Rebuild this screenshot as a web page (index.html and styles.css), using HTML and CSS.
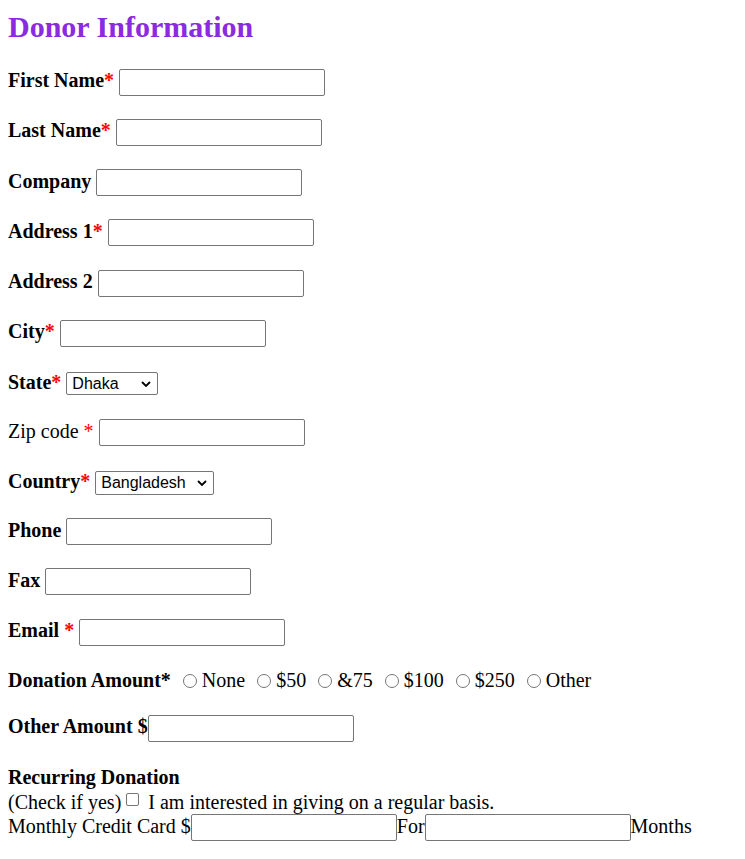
FILE: index.html
```html
<!DOCTYPE html>
<html>
<head>
<meta charset="utf-8">
<title>Donor Information</title>
<link rel="stylesheet" href="styles.css">
</head>
<body>
<form class="donor-form">
  <h1 class="title">Donor Information</h1>
  <div class="row"><label class="lbl">First Name<span class="req">*</span></label> <input class="field" type="text"></div>
  <div class="row"><label class="lbl">Last Name<span class="req">*</span></label> <input class="field" type="text"></div>
  <div class="row"><label class="lbl">Company</label> <input class="field" type="text"></div>
  <div class="row"><label class="lbl">Address 1<span class="req">*</span></label> <input class="field" type="text"></div>
  <div class="row"><label class="lbl">Address 2</label> <input class="field" type="text"></div>
  <div class="row"><label class="lbl">City<span class="req">*</span></label> <input class="field" type="text"></div>
  <div class="row row-select"><label class="lbl">State<span class="req">*</span></label> <select class="sel sel-state"><option>Dhaka</option><option>Chittagong</option></select></div>
  <div class="row"><label>Zip code <span class="req">*</span></label> <input class="field" type="text"></div>
  <div class="row row-select"><label class="lbl">Country<span class="req">*</span></label> <select class="sel sel-country"><option>Bangladesh</option></select></div>
  <div class="row"><label class="lbl">Phone</label> <input class="field" type="text"></div>
  <div class="row"><label class="lbl">Fax</label> <input class="field" type="text"></div>
  <div class="row"><label class="lbl">Email <span class="req">*</span></label> <input class="field" type="text"></div>
  <div class="row row-radio"><label class="lbl">Donation Amount*</label>
    <input class="radio" type="radio" name="amt">None
    <input class="radio" type="radio" name="amt">$50
    <input class="radio" type="radio" name="amt">&amp;75
    <input class="radio" type="radio" name="amt">$100
    <input class="radio" type="radio" name="amt">$250
    <input class="radio" type="radio" name="amt">Other
  </div>
  <div class="row"><label class="lbl">Other Amount $</label><input class="field" type="text"></div>
  <div class="recurring">
    <div class="lbl rec-title">Recurring Donation</div>
    <div class="line">(Check if yes)<input class="check" type="checkbox"> I am interested in giving on a regular basis.</div>
    <div class="line">Monthly Credit Card $<input class="field" type="text">For<input class="field" type="text">Months</div>
  </div>
</form>
</body>
</html>
```

FILE: styles.css
```css
body {
  margin: 8px;
  font-family: "Liberation Serif", "Times New Roman", serif;
  font-size: 20px;
  color: #000;
  background: #fff;
}

.donor-form {
  margin: 0;
}

.title {
  font-size: 30px;
  font-weight: bold;
  color: #8a2be2;
  margin: 2px 0 23px;
}

.row {
  margin: 0 0 21.8px;
  line-height: 27px;
}

.row-select {
  line-height: 27px;
}

.row-radio {
  line-height: 24px;
}

.lbl {
  font-weight: bold;
}

.req {
  color: #f00;
}

.field {
  box-sizing: border-box;
  width: 206px;
  height: 27px;
  padding: 1px 2px;
  border: 1px solid #767676;
  border-radius: 2px;
  background: #fff;
  font-size: 16px;
  font-family: Arial, "Liberation Sans", sans-serif;
  vertical-align: baseline;
  margin: 0;
}

.sel {
  -webkit-appearance: none;
  appearance: none;
  box-sizing: border-box;
  height: 24px;
  padding: 0 22px 0 5px;
  border: 1px solid #767676;
  border-radius: 2px;
  color: #000;
  font-size: 16px;
  font-family: Arial, "Liberation Sans", sans-serif;
  line-height: 20px;
  margin: 0;
  background-color: #fff;
  background-image: url("data:image/svg+xml,%3Csvg xmlns='http://www.w3.org/2000/svg' width='10' height='6' viewBox='0 0 10 6'%3E%3Cpath d='M1 1l4 4 4-4' fill='none' stroke='%23000' stroke-width='1.8'/%3E%3C/svg%3E");
  background-repeat: no-repeat;
  background-position: right 6px center;
}

.sel-state {
  width: 92px;
  height: 23px;
}

.sel-country {
  width: 119px;
}

.radio {
  -webkit-appearance: none;
  appearance: none;
  box-sizing: border-box;
  width: 14px;
  height: 14px;
  border: 1px solid #767676;
  border-radius: 50%;
  background: #fff;
  margin: 3px 5px 0 7px;
  vertical-align: -1px;
}

.check {
  -webkit-appearance: none;
  appearance: none;
  box-sizing: border-box;
  width: 13px;
  height: 13px;
  border: 1px solid #767676;
  border-radius: 2px;
  background: #fff;
  margin: 3px 4px 3px 5px;
  vertical-align: 0;
}

.recurring {
  padding-top: 1px;
  line-height: 24px;
}

.rec-title {
  margin-bottom: 1px;
}

.line {
  line-height: 24px;
}
```
